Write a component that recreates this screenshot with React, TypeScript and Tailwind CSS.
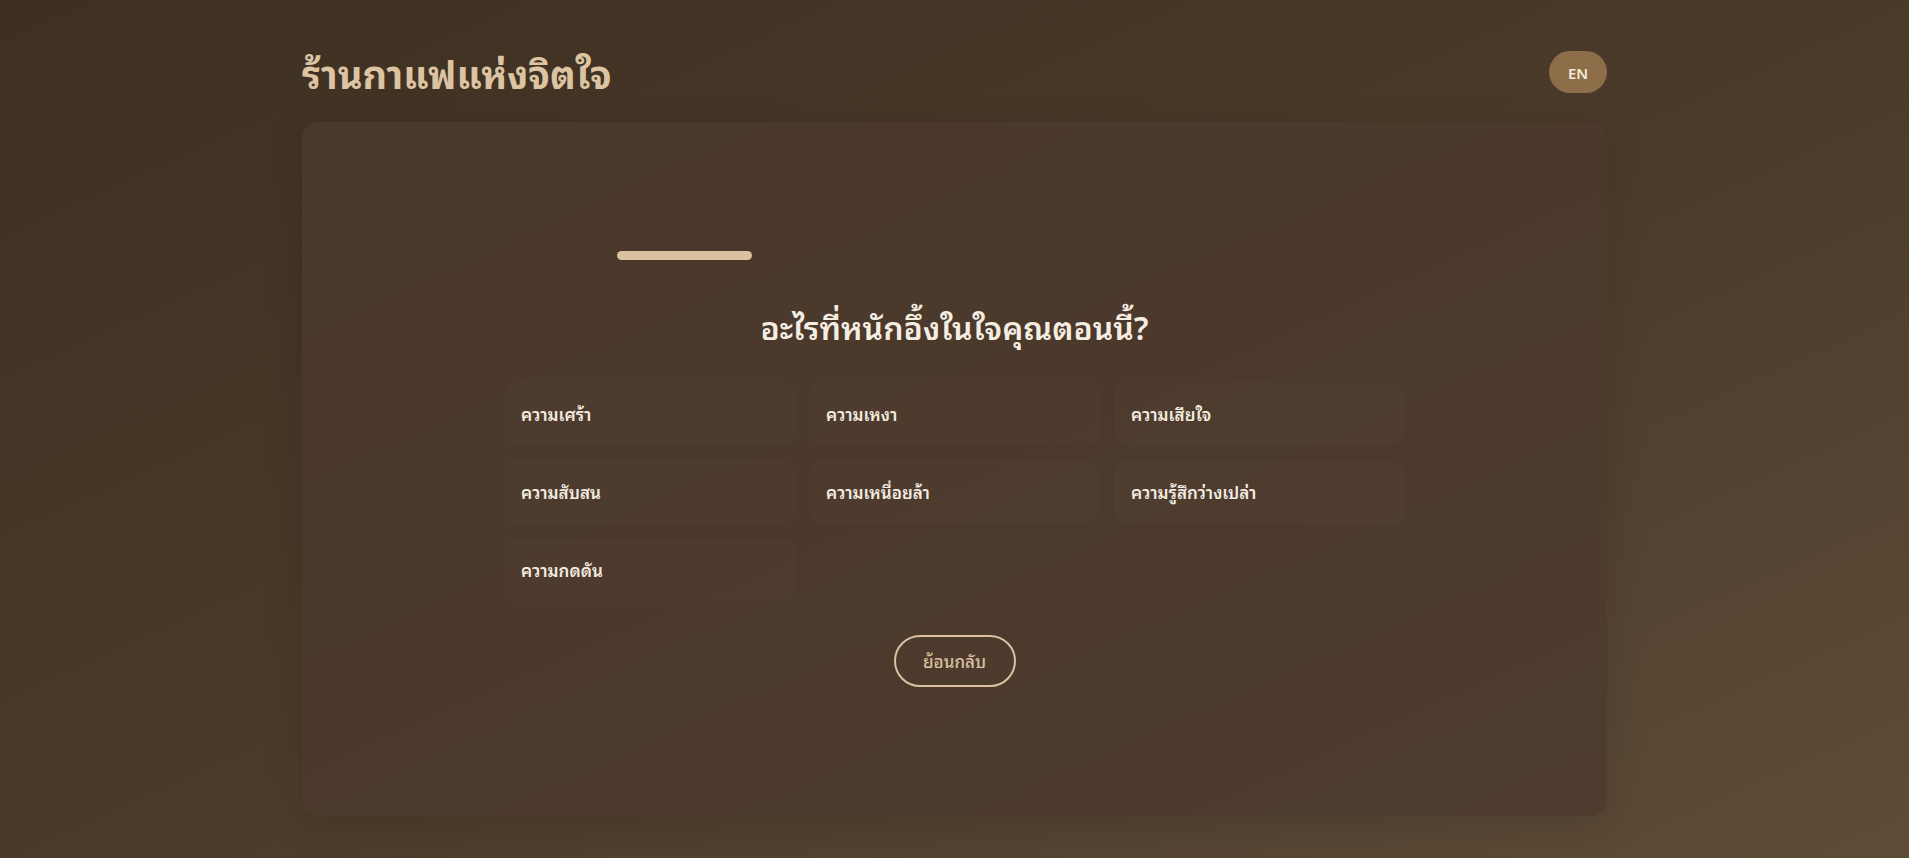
const feelings = [
  "ความเศร้า",
  "ความเหงา",
  "ความเสียใจ",
  "ความสับสน",
  "ความเหนื่อยล้า",
  "ความรู้สึกว่างเปล่า",
  "ความกดดัน",
];

export default function App() {
  return (
    <div
      className="min-h-screen w-full bg-gradient-to-br from-[#3d2f21] via-[#4a3a2a] to-[#5e4c37]"
      style={{
        fontFamily:
          '"Leelawadee UI", Tahoma, "Noto Sans Thai Looped", Loma, Garuda, "Noto Sans", "Noto Sans Thai", sans-serif',
      }}
    >
      <div className="mx-auto w-[1305px] pt-[51px] pb-10">
        <header className="mb-[29px] flex h-[42px] items-center justify-between">
          <h1 className="text-[38px] leading-[42px] font-bold text-[#dcc3a2]">ร้านกาแฟแห่งจิตใจ</h1>
          <button className="h-[42px] w-[58px] rounded-full bg-[#8c6f48] text-[15px] font-semibold text-[#f3e9da]">
            EN
          </button>
        </header>

        <main className="rounded-2xl bg-[#4c3a2d]/80 pt-[129px] pb-[129px] shadow-[0_10px_40px_rgba(0,0,0,0.12)]">
          <div className="mx-auto mb-[46px] h-[9px] w-[676px]">
            <div className="h-full w-[20%] rounded-full bg-[#dbc1a2]" />
          </div>

          <h2 className="mb-[37px] text-center text-[32px] leading-[40px] font-semibold text-[#f5ede2]">
            อะไรที่หนักอึ้งในใจคุณตอนนี้?
          </h2>

          <div className="mx-auto grid w-[899px] grid-cols-3 gap-4">
            {feelings.map((f) => (
              <button
                key={f}
                className="h-[62px] rounded-xl border border-white/[0.015] bg-white/[0.012] px-[15px] text-left text-[17px] leading-6 font-semibold text-[#f3ebe0]"
              >
                {f}
              </button>
            ))}
          </div>

          <div className="mt-[34px] flex justify-center">
            <button className="h-[52px] w-[122px] rounded-full border-2 border-[#dbc1a2] text-[17px] leading-6 font-medium text-[#dbc1a2]">
              ย้อนกลับ
            </button>
          </div>
        </main>
      </div>
    </div>
  );
}
